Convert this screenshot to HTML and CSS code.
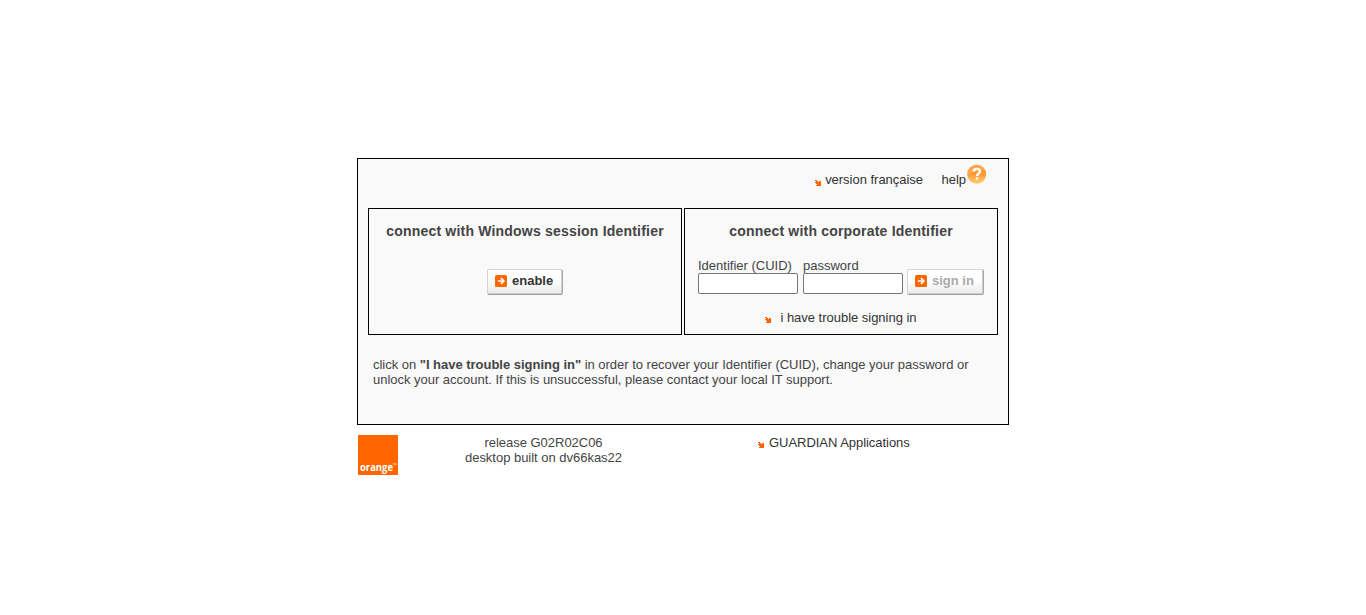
FILE: index.html
```html
<!DOCTYPE html>
<html lang="en">
<head>
<meta charset="utf-8">
<title>Sign in</title>
<link rel="stylesheet" href="styles.css">
</head>
<body>
<svg class="defs" width="0" height="0">
  <symbol id="arrow" viewBox="0 0 6 6"><path fill="#ff6600" d="M0 0h2v1h1v1h1v-1h2v5h-5v-1h1v-1h-1v-1h-1v-1h1v-1h-1z"/></symbol>
  <symbol id="go" viewBox="0 0 12 12"><rect width="12" height="12" rx="1.5" fill="#ff6600"/><path d="M2.8 6H8.5M6 3.2L8.8 6 6 8.8" fill="none" stroke="#fff" stroke-width="1.7"/></symbol>
</svg>
<main class="page">
  <section class="panel">
    <nav class="top">
      <a class="french"><svg class="arrow"><use href="#arrow"/></svg>version française</a>
      <a class="help">help<svg class="help-icon" viewBox="0 0 20 20"><defs><linearGradient id="g" x1="0" y1="0" x2="0" y2="1"><stop offset="0" stop-color="#ff922b"/><stop offset=".5" stop-color="#ff9b35"/><stop offset="1" stop-color="#ffcd72"/></linearGradient></defs><circle cx="9.7" cy="10.2" r="9.5" fill="url(#g)"/><path d="M1 11C1 5 5 1 10 1c4 0 7 2 8 5C12 5 6 7 1 11z" fill="#fff" opacity=".16"/><path d="M6.7 7.6C6.7 3.8 12.9 4 12.9 7.3c0 2.5-2.9 2.4-2.9 4.6" fill="none" stroke="#fff" stroke-width="2.3"/><rect x="8.8" y="13.2" width="2.4" height="2.4" fill="#fff"/></svg></a>
    </nav>
    <div class="boxes">
      <section class="box">
        <h2 class="title">connect with Windows session Identifier</h2>
        <button class="button enable"><svg class="go"><use href="#go"/></svg>enable</button>
      </section>
      <section class="box">
        <h2 class="title">connect with corporate Identifier</h2>
        <form class="form">
          <label class="field">Identifier (CUID)<input class="input" type="text"></label>
          <label class="field">password<input class="input" type="password"></label>
          <button class="button signin" type="button" disabled><svg class="go"><use href="#go"/></svg>sign in</button>
        </form>
        <a class="trouble"><svg class="arrow"><use href="#arrow"/></svg>i have trouble signing in</a>
      </section>
    </div>
    <p class="note">click on <b>"I have trouble signing in"</b> in order to recover your Identifier (CUID), change your password or unlock your account. If this is unsuccessful, please contact your local IT support.</p>
  </section>
  <footer class="footer">
    <svg class="logo" viewBox="0 0 40 40"><rect width="40" height="40" fill="#ff6600"/><text class="brand" x="2" y="36" textLength="33" lengthAdjust="spacingAndGlyphs">orange</text><text class="tm" x="35" y="32">™</text></svg>
    <p class="release">release G02R02C06<br>desktop built on dv66kas22</p>
    <a class="guardian"><svg class="arrow"><use href="#arrow"/></svg>GUARDIAN Applications</a>
  </footer>
</main>
</body>
</html>
```
FILE: styles.css
```css
* { box-sizing: border-box; }
body { margin: 0; background: #fff; color: #444; font: 13px/15px "Liberation Sans", Arial, sans-serif; }
.defs { display: block; height: 0; }
.page { width: 652px; margin: 0 auto; padding-top: 158px; }
.panel { height: 267px; padding: 0 10px; border: 1px solid #000; background: #f9f9f9; }
.top { display: flex; justify-content: flex-end; height: 49px; padding: 6px 11px 0 0; color: #333; }
.french { margin: 7px 18.4px 0 0; letter-spacing: -.02px; }
.help { display: flex; padding-top: 7px; letter-spacing: -.01px; }
.help-icon { width: 20px; height: 20px; margin: -8px 0 0 1px; }
.arrow { width: 6px; height: 6px; margin-right: 4px; vertical-align: -1px; }
.french .arrow { vertical-align: -2px; }
.boxes { display: flex; gap: 2px; }
.box { flex: 1; height: 127px; border: 1px solid #000; text-align: center; }
.title { margin: 14px 0 0; font-size: 14px; line-height: 16px; letter-spacing: .2px; }
.button { display: flex; align-items: center; height: 26px; padding: 0 0 3px 7px; border: 1px solid #d4d4d4; border-right-color: #a8a8a8; border-bottom-color: #a0a0a0; border-radius: 2px; background: linear-gradient(#fff 45%, #e9e9e9); box-shadow: inset -1px -1px #ccc; color: #333; font: bold 13px/15px "Liberation Sans", Arial, sans-serif; white-space: nowrap; }
.enable { width: 76px; margin: 30px auto 0; }
.signin { flex: none; width: 77px; margin-left: -1px; color: #aaa; }
.go { flex: none; width: 12px; height: 12px; margin-right: 5px; }
.form { display: flex; align-items: flex-end; gap: 5px; height: 56px; padding: 0 13px; }
.field { display: block; height: 37px; text-align: left; }
.input { display: block; width: 100px; height: 21px; margin: 0; border: 1px solid #767676; border-radius: 2px; background: #fff; }
.trouble { display: block; margin-top: 15px; color: #333; letter-spacing: -.02px; }
.trouble .arrow { margin-right: 9px; vertical-align: -1px; }
.note { margin: 22px 15px 0 5px; letter-spacing: -.02px; }
.footer { display: flex; height: 50px; padding: 10px 1px 0; }
.logo { width: 40px; height: 40px; }
.brand { fill: #fff; font: bold 10px "Open Sans", sans-serif; }
.tm { fill: #fff; font: bold 5px "Open Sans", sans-serif; }
.release { width: 161px; margin: 0 0 0 65px; text-align: center; white-space: nowrap; letter-spacing: -.02px; }
.guardian { margin-left: 134px; color: #333; letter-spacing: -.04px; }
.guardian .arrow { margin-right: 5px; }
```
